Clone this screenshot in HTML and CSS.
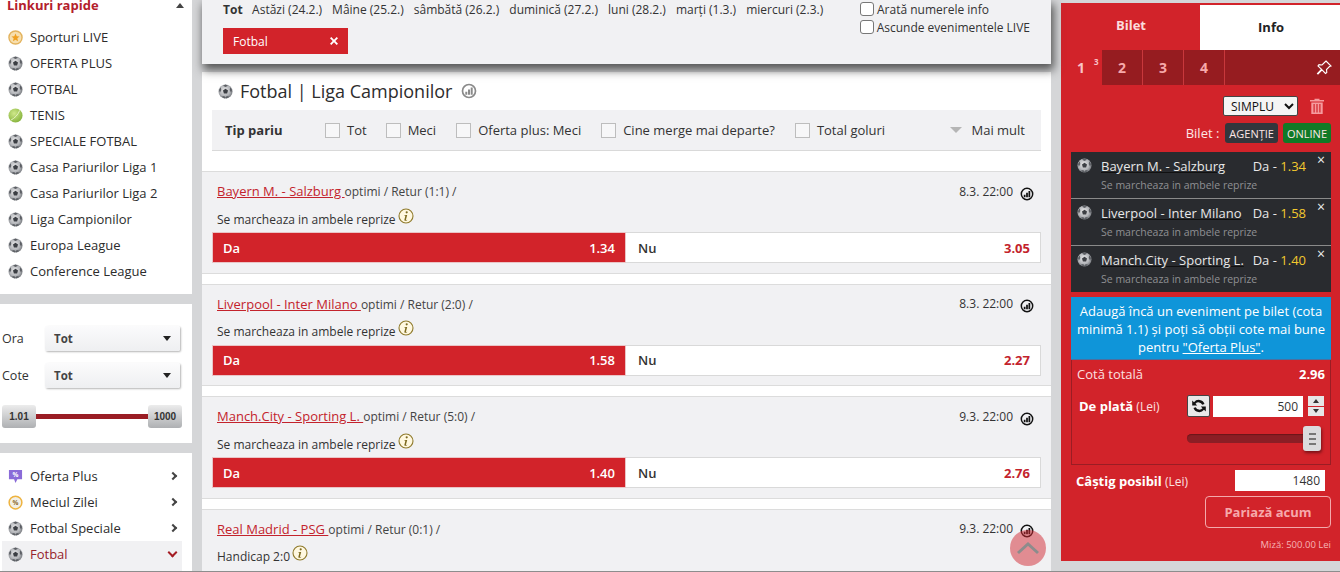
FILE: index.html
```html
<!DOCTYPE html>
<html lang="ro">
<head>
<meta charset="utf-8">
<title>Fotbal | Liga Campionilor</title>
<link rel="stylesheet" href="styles.css">
</head>
<body>
<svg class="defs" width="0" height="0" aria-hidden="true">
  <defs>
    <radialGradient id="ballg" cx="45%" cy="42%" r="65%"><stop offset="0" stop-color="#e9e9ea"/><stop offset=".6" stop-color="#b3b5b9"/><stop offset="1" stop-color="#63666b"/></radialGradient>
    <radialGradient id="teng" cx="40%" cy="35%" r="75%"><stop offset="0" stop-color="#cfe88a"/><stop offset="1" stop-color="#7fae35"/></radialGradient>
    <symbol id="ball" viewBox="0 0 16 16">
      <circle cx="8" cy="8" r="7.5" fill="url(#ballg)"/>
      <path d="M8 5l2.700 2-1 3.200H6.300l-1-3.200z" fill="#3c3f44"/>
      <path d="M8 .6l2.700 1.200L8 3.100 5.300 1.800zM1 6.500l2-3 .5 2.800-1.500 3zM15 6.500l-2-3-.5 2.800 1.500 3zM4 13.500l2.500-.8L8 14.500l-1 1zM12 13.500l-2.500-.8L8 14.500l1 1z" fill="#5c5f64"/>
    </symbol>
    <symbol id="stats" viewBox="0 0 16 16">
      <circle cx="8" cy="8" r="6.500" fill="none" stroke="currentColor" stroke-width="1.700"/>
      <path d="M4.300 8.800h2v2.900h-2zM7 6.600h2v5.100H7zM9.700 4.600h2v7.100h-2z" fill="currentColor"/>
    </symbol>
    <symbol id="info" viewBox="0 0 16 16">
      <circle cx="8" cy="8" r="7" fill="#fff8e0" stroke="#8f7a2b" stroke-width="1.100"/>
      <circle cx="8.700" cy="4.300" r="1.100" fill="#7d6a20"/>
      <path d="M6.300 7h2.900L8 11.600c-.1.500.3.600 1.300.1l-.2.600c-1.600.8-3 .8-2.700-.5L7.300 8c.1-.4-.2-.5-1-.4z" fill="#7d6a20"/>
    </symbol>
  </defs>
</svg>
<div class="page">
  <aside class="left">
    <section class="panel quick">
      <h2 class="quick-title"><span>Linkuri rapide</span><i class="caret-up"></i></h2>
      <ul class="side-list">
        <li><svg class="ico" viewBox="0 0 16 16"><circle cx="8" cy="8" r="7" fill="#f7dfae" stroke="#e3b35e" stroke-width="1.500"/><path d="M8 3.800l1.300 2.800 3 .3-2.300 2 .7 3L8 10.400l-2.700 1.500.7-3-2.300-2 3-.3z" fill="#f0a020"/></svg>Sporturi LIVE</li>
        <li><svg class="ico"><use href="#ball"/></svg>OFERTA PLUS</li>
        <li><svg class="ico"><use href="#ball"/></svg>FOTBAL</li>
        <li><svg class="ico" viewBox="0 0 16 16"><circle cx="8" cy="8" r="7.500" fill="url(#teng)"/><path d="M3 13C7 11 11 7 12.500 2.500" fill="none" stroke="#e8f4c8" stroke-width="1"/></svg>TENIS</li>
        <li><svg class="ico"><use href="#ball"/></svg>SPECIALE FOTBAL</li>
        <li><svg class="ico"><use href="#ball"/></svg>Casa Pariurilor Liga 1</li>
        <li><svg class="ico"><use href="#ball"/></svg>Casa Pariurilor Liga 2</li>
        <li><svg class="ico"><use href="#ball"/></svg>Liga Campionilor</li>
        <li><svg class="ico"><use href="#ball"/></svg>Europa League</li>
        <li><svg class="ico"><use href="#ball"/></svg>Conference League</li>
      </ul>
    </section>
    <section class="panel filters">
      <div class="filter-row"><label>Ora</label><div class="fake-select"><span>Tot</span><i class="caret-down"></i></div></div>
      <div class="filter-row"><label>Cote</label><div class="fake-select"><span>Tot</span><i class="caret-down"></i></div></div>
      <div class="range"><b>1.01</b><i></i><b>1000</b></div>
    </section>
    <section class="panel menu">
      <ul class="side-list">
        <li><svg class="ico" viewBox="0 0 16 16"><path d="M1 1h14v10H10l-2 4-1.500-4H1z" fill="#8a6bd8"/><text x="8" y="8.500" class="pct" text-anchor="middle">%</text></svg>Oferta Plus<i class="chev"></i></li>
        <li><svg class="ico" viewBox="0 0 16 16"><circle cx="8" cy="8" r="6.800" fill="#f2efe6" stroke="#eeb33f" stroke-width="1.600"/><text x="8" y="10.500" class="pct dark" text-anchor="middle">%</text></svg>Meciul Zilei<i class="chev"></i></li>
        <li><svg class="ico"><use href="#ball"/></svg>Fotbal Speciale<i class="chev"></i></li>
        <li class="active"><svg class="ico"><use href="#ball"/></svg>Fotbal<i class="chev down"></i></li>
      </ul>
    </section>
  </aside>

  <main class="center">
    <section class="topbar">
      <div class="days">
        <div class="day-list"><b>Tot</b><span>Astăzi (24.2.)</span><span>Mâine (25.2.)</span><span>sâmbătă (26.2.)</span><span>duminică (27.2.)</span><span>luni (28.2.)</span><span>marți (1.3.)</span><span>miercuri (2.3.)</span></div>
        <div class="chip"><span>Fotbal</span><svg class="chip-x" viewBox="0 0 10 10"><path d="M2.300 1L5 3.700 7.700 1 9 2.300 6.300 5 9 7.700 7.700 9 5 6.300 2.300 9 1 7.700 3.700 5 1 2.300z" fill="#fff"/></svg></div>
      </div>
      <div class="top-checks">
        <label><i class="round-check"></i>Arată numerele info</label>
        <label><i class="round-check"></i>Ascunde evenimentele LIVE</label>
      </div>
    </section>
    <section class="content">
      <h1 class="title"><svg class="ico"><use href="#ball"/></svg>Fotbal | Liga Campionilor<svg class="title-stats"><use href="#stats"/></svg></h1>
      <div class="bet-types">
        <b>Tip pariu</b>
        <label class="t1"><i class="box"></i>Tot</label>
        <label><i class="box"></i>Meci</label>
        <label><i class="box"></i>Oferta plus: Meci</label>
        <label><i class="box"></i>Cine merge mai departe?</label>
        <label><i class="box"></i>Total goluri</label>
        <span class="more"><i class="caret-grey"></i>Mai mult</span>
      </div>
      <article class="event">
        <div class="ev-head"><div><a href="#">Bayern M. - Salzburg </a><span class="round">optimi / Retur (1:1) /</span></div><div class="ev-time">8.3. 22:00<svg class="stat"><use href="#stats"/></svg></div></div>
        <div class="market">Se marcheaza in ambele reprize<svg class="info"><use href="#info"/></svg></div>
        <div class="odds"><div class="odd sel"><b>Da</b><b>1.34</b></div><div class="odd"><b>Nu</b><b class="val">3.05</b></div></div>
      </article>
      <article class="event">
        <div class="ev-head"><div><a href="#">Liverpool - Inter Milano </a><span class="round">optimi / Retur (2:0) /</span></div><div class="ev-time">8.3. 22:00<svg class="stat"><use href="#stats"/></svg></div></div>
        <div class="market">Se marcheaza in ambele reprize<svg class="info"><use href="#info"/></svg></div>
        <div class="odds"><div class="odd sel"><b>Da</b><b>1.58</b></div><div class="odd"><b>Nu</b><b class="val">2.27</b></div></div>
      </article>
      <article class="event">
        <div class="ev-head"><div><a href="#">Manch.City - Sporting L. </a><span class="round">optimi / Retur (5:0) /</span></div><div class="ev-time">9.3. 22:00<svg class="stat"><use href="#stats"/></svg></div></div>
        <div class="market">Se marcheaza in ambele reprize<svg class="info"><use href="#info"/></svg></div>
        <div class="odds"><div class="odd sel"><b>Da</b><b>1.40</b></div><div class="odd"><b>Nu</b><b class="val">2.76</b></div></div>
      </article>
      <article class="event">
        <div class="ev-head"><div><a href="#">Real Madrid - PSG </a><span class="round">optimi / Retur (0:1) /</span></div><div class="ev-time">9.3. 22:00<svg class="stat"><use href="#stats"/></svg></div></div>
        <div class="market">Handicap 2:0<svg class="info"><use href="#info"/></svg></div>
      </article>
    </section>
    <button class="to-top" aria-label="Sus"><svg viewBox="0 0 24 14" width="24" height="14"><path d="M2 12L12 3l10 9" fill="none" stroke="#8c8c8c" stroke-width="3"/></svg></button>
  </main>

  <aside class="slip">
    <div class="tabs"><div class="tab on">Bilet</div><div class="tab">Info</div></div>
    <div class="slots">
      <div class="slot cur">1<sup>3</sup></div><div class="slot">2</div><div class="slot">3</div><div class="slot">4</div>
      <svg class="pin" viewBox="0 0 16 16"><path d="M10 1l5 5-1.500.5-3 3 .3 3-1.300 1L6 9.800 2 14l-.5-.5L5.500 9.300 2 6l1-1.300 3 .3 3-3z" fill="none" stroke="#fff" stroke-width="1.100"/></svg>
    </div>
    <div class="mode">
      <select class="mode-sel"><option>SIMPLU</option></select>
      <svg class="trash" viewBox="0 0 14 16"><path d="M4.500 2V.8h5V2H14v1.500H0V2zM1.300 4.500h11.400V16H1.300zM3.500 6v8.500h1.200V6zM6.400 6v8.500h1.200V6zM9.300 6v8.500h1.200V6z" fill="#f59a9e" fill-rule="evenodd"/></svg>
    </div>
    <div class="channel"><span>Bilet :</span><b class="agency">AGENȚIE</b><b class="online">ONLINE</b></div>
    <div class="tickets">
      <div class="ticket"><svg class="ico"><use href="#ball"/></svg><div class="t-body"><div class="t-line"><u>Bayern M. - Salzburg</u><span>Da - <em>1.34</em></span></div><small>Se marcheaza in ambele reprize</small></div><i class="t-x">×</i></div>
      <div class="ticket"><svg class="ico"><use href="#ball"/></svg><div class="t-body"><div class="t-line"><u>Liverpool - Inter Milano</u><span>Da - <em>1.58</em></span></div><small>Se marcheaza in ambele reprize</small></div><i class="t-x">×</i></div>
      <div class="ticket"><svg class="ico"><use href="#ball"/></svg><div class="t-body"><div class="t-line"><u>Manch.City - Sporting L.</u><span>Da - <em>1.40</em></span></div><small>Se marcheaza in ambele reprize</small></div><i class="t-x">×</i></div>
    </div>
    <p class="notice">Adaugă încă un eveniment pe bilet (cota minimă 1.1) și poți să obții cote mai bune pentru <u>"Oferta Plus"</u>.</p>
    <div class="stake-box">
      <div class="total"><span>Cotă totală</span><b>2.96</b></div>
      <div class="stake">
        <span class="stake-label"><b>De plată</b> (Lei)</span>
        <button class="refresh" aria-label="Reîncarcă"><svg viewBox="0 0 16 16" width="16" height="16"><path d="M13.500 6A6 6 0 0 0 3 4.200L1.200 2.500V7.500h5L4.500 5.700A4 4 0 0 1 11.200 6.800zM2.500 10A6 6 0 0 0 13 11.800l1.800 1.700V8.500h-5l1.700 1.800A4 4 0 0 1 4.800 9.200z" fill="#111"/></svg></button>
        <div class="num">500</div>
        <div class="spin"><i class="s-up"></i><i class="s-down"></i></div>
      </div>
      <div class="slider"><div class="track"></div><div class="thumb"><i></i><i></i><i></i></div></div>
    </div>
    <div class="win"><span><b>Câștig posibil</b> (Lei)</span><div class="num win-num">1480</div></div>
    <button class="place">Pariază acum</button>
    <div class="mise">Miză: 500.00 Lei</div>
  </aside>
</div>
</body>
</html>
```
FILE: styles.css
```css
* { box-sizing: border-box; }
html, body { margin: 0; padding: 0; height: 572px; overflow: hidden; }
body { font-family: "Open Sans", "Liberation Sans", sans-serif; font-size: 13px; color: #222; background: #d5d6d8; }
i, em { font-style: normal; }
ul { list-style: none; margin: 0; padding: 0; }
.defs { position: absolute; }
.page { display: grid; grid-template-columns: 192px 849px 279px; column-gap: 10px; height: 571px; box-shadow: 0 1px 0 #8d8d8d; overflow: hidden; }

.left { display: flex; flex-direction: column; gap: 10px; }
.panel { background: #fff; }
.quick { height: 294px; flex: none; }
.quick-title { display: flex; justify-content: space-between; align-items: center; margin: 0; height: 11px; padding: 0 8px 0 7px; font-size: 13px; line-height: 11px; color: #b3202c; font-weight: 700; }
.caret-up { width: 0; height: 0; border: 4px solid transparent; border-top: 0; border-bottom: 5px solid #444; }
.side-list li { display: flex; align-items: center; height: 26px; padding-left: 8px; color: #2c2c2c; white-space: nowrap; }
.quick .side-list { padding-top: 13px; }
.ico { width: 15px; height: 15px; flex: none; margin-right: 7px; }
.filters { height: 139px; flex: none; padding: 22px 12px 0 2px; }
.filter-row { display: flex; align-items: center; height: 25px; margin-bottom: 12px; }
.filter-row label { width: 43px; color: #333; font-size: 12.500px; }
.fake-select { flex: none; width: 135px; height: 25px; display: flex; justify-content: space-between; align-items: center; padding: 0 9px; background: linear-gradient(#fbfbfc, #eeeff1); border-radius: 2px; box-shadow: 1px 1px 2px #b5b5b5; font-size: 11.500px; font-weight: 700; color: #444; }
.caret-down { width: 0; height: 0; border: 4.500px solid transparent; border-bottom: 0; border-top: 5px solid #222; }
.range { display: flex; align-items: center; margin-top: 17px; margin-right: -2px; }
.range b { width: 34px; height: 23px; display: flex; align-items: center; justify-content: center; font-family: "Liberation Sans", sans-serif; font-size: 10px; color: #333; background: linear-gradient(#ececec, #aeb0b3); border-radius: 3px; }
.range i { flex: 1; height: 5px; background: #9a1d24; }
.menu { flex: 1; padding-top: 10px; }
.menu .side-list li { padding-right: 16px; }
.chev { width: 6px; height: 6px; margin-left: auto; border: solid #444; border-width: 2px 2px 0 0; transform: rotate(45deg); }
.menu .side-list .active { width: 180px; margin-left: 2px; padding: 0 6px 4px 6px; height: 30px; background: #f1f1f3; color: #96232b; }
.chev.down { border-color: #a51d24; width: 7px; height: 7px; transform: translateY(-2px) rotate(135deg); }
.pct { font-size: 7px; font-weight: 700; fill: #fff; font-family: "Open Sans", sans-serif; }
.pct.dark { fill: #8b6a2c; }

.center { position: relative; display: flex; flex-direction: column; }
.topbar { position: relative; z-index: 2; display: flex; justify-content: space-between; height: 64px; padding: 0 21px; background: #f1f1f3; box-shadow: 2px 5px 9px 1px #555; font-size: 12px; flex: none; }
.day-list { display: flex; gap: 10px; height: 19px; align-items: center; color: #333; white-space: nowrap; }
.day-list b { margin-right: -.5px; }
.chip { display: flex; justify-content: space-between; align-items: center; width: 125px; height: 26px; margin-top: 9px; padding: 0 9px 0 10px; background: #d2232a; color: #fff; }
.chip-x { width: 10px; height: 10px; }
.top-checks { display: flex; flex-direction: column; width: 170px; }
.top-checks label { display: flex; align-items: center; height: 18px; color: #333; white-space: nowrap; }
.round-check { width: 14px; height: 14px; margin-right: 3px; background: #fff; border: 1px solid #777; border-radius: 3px; }

.content { flex: 1; margin-top: 8px; background: #fff; min-height: 0; overflow: hidden; }
.title { display: flex; align-items: center; margin: 0; height: 38px; padding: 0 0 0 16px; font-size: 18px; font-weight: 400; color: #2d2d2d; }
.title .ico { margin-right: 7px; }
.title-stats { width: 16px; height: 16px; margin-left: 9px; color: #8a8a8a; }
.bet-types { display: flex; align-items: center; height: 41px; margin: 0 10px 20px; padding: 0 16px 0 13px; background: #f1f1f3; border-bottom: 1px solid #d9d9d9; color: #333; }
.bet-types > b { width: 100px; }
.bet-types label { display: flex; align-items: center; margin-right: 20px; white-space: nowrap; }
.bet-types .t1 { margin-right: 19px; }
.box { width: 15px; height: 15px; margin-right: 7px; background: #f7f7f8; border: 1px solid #bdbdbd; }
.more { display: flex; align-items: center; margin-left: auto; }
.caret-grey { width: 0; height: 0; margin-right: 10px; border: 6px solid transparent; border-bottom: 0; border-top: 6px solid #b5b5b5; }
.event { height: 102.500px; margin-bottom: 10px; padding: 9px 10px 0; background: #f1f1f3; border-top: 1px solid #dcdcdc; border-bottom: 1px solid #dcdcdc; }
.ev-head { display: flex; justify-content: space-between; padding: 0 0 0 5px; height: 20px; align-items: center; font-size: 12px; color: #444; white-space: nowrap; }
.ev-head a { font-size: 13px; color: #c3232c; }
.ev-time { display: flex; align-items: center; color: #333; padding-right: 7px; }
.stat { width: 14px; height: 14px; margin: 5px 0 0 7px; color: #111; }
.market { display: flex; align-items: center; height: 22px; margin-top: 7px; padding-left: 5px; font-size: 12px; color: #333; }
.info { width: 16px; height: 16px; margin: -7px 0 0 2px; }
.odds { display: flex; height: 31px; margin-top: 2px; }
.odd { flex: 1; display: flex; justify-content: space-between; align-items: center; padding: 0 10px 0 12px; background: #fff; border: 1px solid #d9d9d9; border-left: 0; }
.odd b { font-weight: 600; }
.odd .val { color: #c3232c; font-weight: 700; }
.odd.sel { background: #d2232a; border: 1px solid #eac4c6; color: #fff; width: 414px; flex: none; padding: 0 10px; }
.odd:not(.sel) b:first-child { color: #333; }
.to-top { position: absolute; top: 530px; right: 5px; z-index: 3; width: 36px; height: 36px; padding: 0; display: flex; align-items: center; justify-content: center; border: 0; border-radius: 50%; background: rgba(210, 40, 50, .5); }

.slip { height: 558px; margin-top: 3px; background: #d2232a; color: #fff; display: flex; flex-direction: column; }
.tabs { display: flex; height: 47px; flex: none; align-items: flex-end; }
.tab { flex: 1; display: flex; align-items: center; justify-content: center; height: 45px; padding: 0 0 2px 2px; background: #fff; color: #222; font-weight: 700; font-size: 13px; }
.tab.on { height: 47px; padding: 0 0 3px 1px; background: transparent; color: #fbdcdc; }
.slots { display: flex; height: 35px; background: #961c20; align-items: center; position: relative; flex: none; }
.slot { width: 41px; height: 35px; display: flex; align-items: center; justify-content: center; font-size: 14px; font-weight: 700; color: #f7a9ab; border-right: 1px solid #c8383c; }
.slot.cur { justify-content: flex-start; padding-left: 16px; background: #d2232a; border: 0; color: #f9c4c6; }
.slot sup { font-size: 8px; margin: -12px 0 0 9px; line-height: 1; }
.pin { width: 16px; height: 16px; margin-left: auto; margin-right: 8px; }
.mode { display: flex; justify-content: flex-end; align-items: center; height: 20px; margin-top: 11px; padding-right: 16px; flex: none; }
.mode-sel { width: 75px; height: 20px; padding: 0 0 0 3px; font-family: "Open Sans", sans-serif; font-size: 12px; background: #f4f4f4; color: #111; border: 1px solid #444; border-radius: 2px; }
.trash { width: 14px; height: 16px; margin-left: 12px; }
.channel { display: flex; justify-content: flex-end; align-items: center; height: 20px; margin-top: 7px; padding-right: 9px; font-size: 13px; gap: 5px; color: #fde6e6; flex: none; }
.channel b { display: flex; align-items: center; height: 20px; padding: 0 4px; border-radius: 3px; font-weight: 400; font-size: 11px; }
.agency { background: #33363c; margin-left: 1px; }
.online { background: #107a26; }
.tickets { margin: 9px 9px 0 10px; background: #292b2f; flex: none; }
.ticket { position: relative; display: flex; height: 47px; padding: 5px 0 0 6px; border-bottom: 1px solid #8a8a8a; }
.ticket:last-child { height: 46px; border: 0; }
.ticket .ico { margin: 1px 9px 0 0; }
.t-body { flex: 1; min-width: 0; }
.t-line { display: flex; justify-content: space-between; padding-right: 25px; font-size: 13px; line-height: 18px; color: #e8e8e8; white-space: nowrap; }
.t-line u { text-decoration-color: #111; }
.t-line em { color: #f3c92e; }
.ticket small { display: block; margin-top: 3px; font-size: 10.500px; color: #8f9093; line-height: 14px; }
.t-x { position: absolute; top: 1px; right: 6px; font-size: 14px; line-height: 14px; color: #eee; }
.notice { flex: none; margin: 5px 9px 0 10px; height: 63px; padding: 5px 4px 0; background: #0f95d9; color: #fff; font-size: 13px; line-height: 18px; text-align: center; border-bottom: 1px solid #4a6fa0; }
.stake-box { flex: none; height: 105px; margin: 0 9px 0 10px; padding: 0 5px; border: 1px solid #9a1d24; border-top: 0; }
.total { display: flex; justify-content: space-between; align-items: center; height: 27px; font-size: 13px; color: #fbe0e0; }
.total b { color: #fff; }
.stake { display: flex; align-items: center; height: 22px; margin-top: 8px; }
.stake-label { width: 110px; padding-left: 2px; font-size: 12px; color: #fbe0e0; }
.stake-label b { color: #fff; font-size: 13px; }
.refresh { display: flex; align-items: center; justify-content: center; width: 23px; height: 22px; padding: 0; background: #e8e8e8; border: 1px solid #444; border-radius: 2px; }
.num { display: flex; justify-content: flex-end; align-items: center; background: #fff; color: #333; font-size: 12px; padding-right: 5px; width: 90px; height: 21px; }
.stake .num { margin-left: 3px; }
.spin { display: flex; flex-direction: column; gap: 1px; margin-left: 5px; width: 16px; height: 20px; }
.spin i { flex: 1; background: #e6e6e6; display: flex; align-items: center; justify-content: center; }
.spin i::after { content: ""; border: 3px solid transparent; }
.s-up::after { border-top: 0 !important; border-bottom: 4px solid #333 !important; }
.s-down::after { border-bottom: 0 !important; border-top: 4px solid #333 !important; }
.slider { position: relative; margin: 17px 0 0 110px; height: 9px; width: 134px; }
.track { height: 9px; width: 123px; border-radius: 5px; background: #8b1e25; box-shadow: inset 0 1px 1px #6b1519; }
.thumb { position: absolute; top: -8px; left: 116px; width: 18px; height: 25px; display: flex; flex-direction: column; justify-content: center; align-items: center; gap: 3px; background: #dbdbdd; border-radius: 3px; box-shadow: 1px 2px 3px #7b1218; }
.thumb i { width: 7px; height: 2px; background: #777; }
.win { display: flex; justify-content: space-between; align-items: center; height: 21px; margin: 5px 15px 0 15px; font-size: 12px; color: #fbe0e0; flex: none; }
.win b { color: #fff; font-size: 13px; }
.place { flex: none; align-self: flex-end; width: 126px; height: 32px; margin: 5px 9px 0 0; background: transparent; border: 1px solid #f3a9ab; border-radius: 4px; color: #f6a9ab; font-family: "Open Sans", sans-serif; font-size: 13px; font-weight: 700; }
.mise { flex: none; margin-top: 10px; padding-right: 9px; text-align: right; font-size: 9.500px; color: #f6b3b5; }
```
